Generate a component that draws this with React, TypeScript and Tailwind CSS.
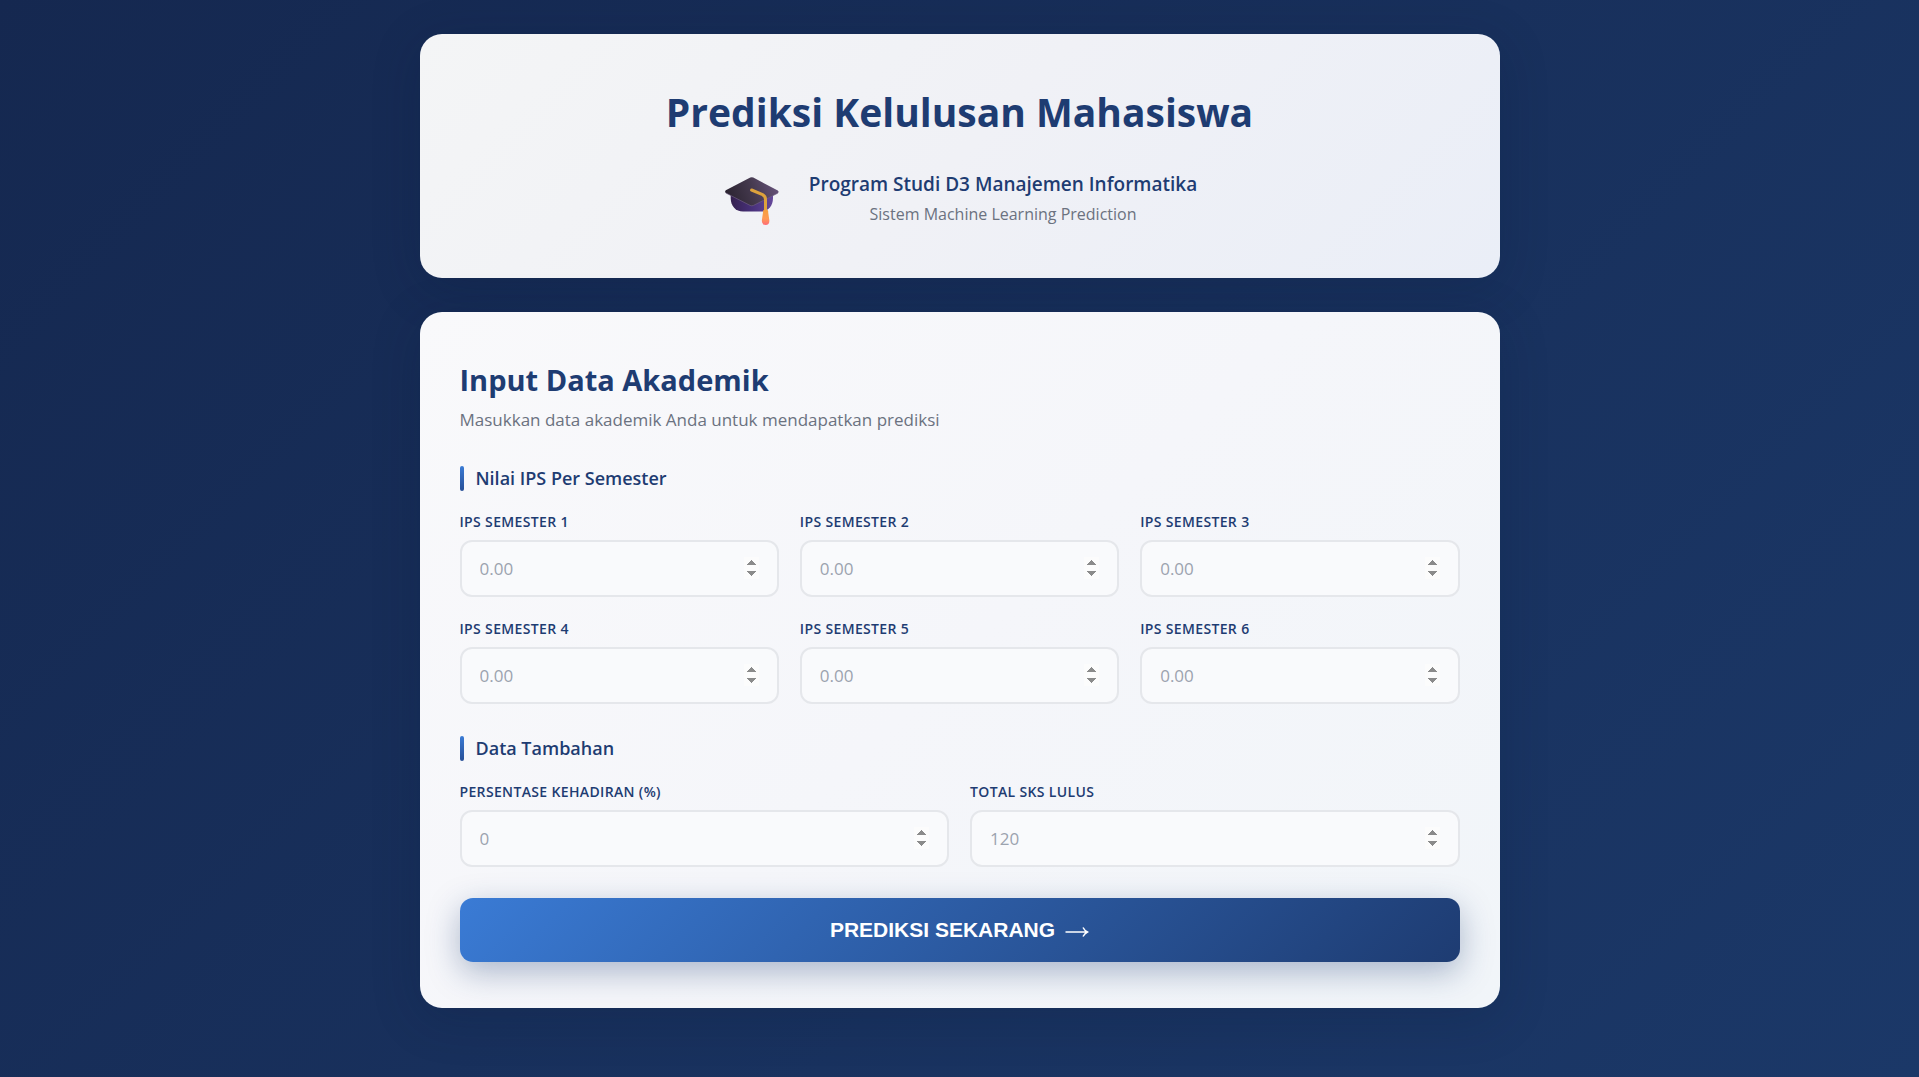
import { useState } from "react";

interface Field {
  id: string;
  label: string;
  placeholder: string;
  step: string;
  max: number;
}

const ipsFields: Field[] = [1, 2, 3, 4, 5, 6].map((n) => ({
  id: `ips${n}`,
  label: `IPS Semester ${n}`,
  placeholder: "0.00",
  step: "0.01",
  max: 4,
}));

const extraFields: Field[] = [
  {
    id: "kehadiran",
    label: "Persentase Kehadiran (%)",
    placeholder: "0",
    step: "1",
    max: 100,
  },
  {
    id: "sks",
    label: "Total SKS Lulus",
    placeholder: "120",
    step: "1",
    max: 160,
  },
];

function GraduationCap() {
  return (
    <svg width="60" height="60" viewBox="0 -5 60 60" aria-hidden="true">
      <defs>
        <linearGradient id="capTop" x1="0" y1="0.6" x2="1" y2="0.4">
          <stop offset="0" stopColor="#2a2330" />
          <stop offset="0.5" stopColor="#43384c" />
          <stop offset="1" stopColor="#66527a" />
        </linearGradient>
        <linearGradient id="capBase" x1="0" y1="0" x2="1" y2="0">
          <stop offset="0" stopColor="#35214f" />
          <stop offset="0.5" stopColor="#47307a" />
          <stop offset="1" stopColor="#65489a" />
        </linearGradient>
        <linearGradient id="tassel" x1="0" y1="0" x2="0" y2="1">
          <stop offset="0" stopColor="#f5a03c" />
          <stop offset="0.6" stopColor="#ff9a55" />
          <stop offset="1" stopColor="#ff6a78" />
        </linearGradient>
      </defs>
      <path
        d="M8.7 20 H51 V25 C51 33 46 38.6 39 38.6 H21 C13.7 38.6 8.7 33 8.7 25 Z"
        fill="url(#capBase)"
      />
      <path
        d="M28.3 4.6 Q29.8 3.8 31.3 4.6 L55.8 17.4 Q57.4 18.8 55.8 20.2 L31.5 32.6 Q29.8 33.4 28.1 32.6 L3.8 20 Q2.4 18.6 3.8 17.2 Z"
        fill="url(#capTop)"
      />
      <path
        d="M3.8 20 L28.1 32.4 Q29.8 33.2 31.5 32.4 L55.8 20.2"
        fill="none"
        stroke="#75628a"
        strokeWidth="1"
        opacity="0.6"
      />
      <path
        d="M29.6 17 L40.6 21.6 Q43.5 23.2 43.5 26.5 V38"
        fill="none"
        stroke="#dda23c"
        strokeWidth="3"
        strokeLinecap="round"
        strokeLinejoin="round"
      />
      <path
        d="M41 39.5 Q40.6 36.4 43.6 36.4 Q46.6 36.4 46.2 39.5 L47.3 47 Q47.8 52 43.6 52 Q39.4 52 39.9 47 Z"
        fill="url(#tassel)"
      />
    </svg>
  );
}

function SectionTitle({ children }: { children: React.ReactNode }) {
  return (
    <div className="flex items-center gap-3 mb-[21px]">
      <span className="w-1 h-[25px] rounded-xs bg-linear-to-b from-[#3a7bd5] to-[#274f97]" />
      <h3 className="text-[18px] leading-[25px] font-semibold text-[#1e3c72]">
        {children}
      </h3>
    </div>
  );
}

interface NumberFieldProps {
  field: Field;
  value: string;
  onChange: (value: string) => void;
}

function NumberField({ field, value, onChange }: NumberFieldProps) {
  return (
    <div>
      <label
        htmlFor={field.id}
        className="block mb-2 text-[14px] leading-5 font-semibold tracking-wide uppercase text-[#1e3c72]"
      >
        {field.label}
      </label>
      <input
        id={field.id}
        type="number"
        min={0}
        max={field.max}
        step={field.step}
        placeholder={field.placeholder}
        value={value}
        onChange={(e) => onChange(e.target.value)}
        className="block w-full h-[57px] px-[18px] text-[17px] text-[#1e3c72] bg-[#f9fafc] border-2 border-[#e5e7eb] rounded-xl outline-none placeholder:text-[#9ca3af] focus:border-[#3a7bd5] [&::-webkit-inner-spin-button]:opacity-100"
      />
    </div>
  );
}

export default function App() {
  const [values, setValues] = useState<Record<string, string>>({});

  const update = (id: string) => (value: string) =>
    setValues((prev) => ({ ...prev, [id]: value }));

  return (
    <div className="min-h-screen px-5 py-[34px] bg-linear-135 from-[#152850] to-[#1b3868] font-['Open_Sans','Noto_Sans',sans-serif]">
      <div className="max-w-[1080px] mx-auto flex flex-col gap-[34px]">
        <header className="px-10 pt-12 pb-[50px] rounded-[22px] text-center bg-linear-135 from-[#f4f5f6] via-[#f0f1f6] to-[#eaeef7] shadow-[0_10px_50px_rgba(10,25,55,0.2)]">
          <h1 className="mb-[26px] text-[39px] leading-[60px] font-bold text-[#1e3c72]">
            Prediksi Kelulusan Mahasiswa
          </h1>
          <div className="flex items-center justify-center gap-[27px]">
            <GraduationCap />
            <div>
              <p className="text-[19px] leading-8 font-semibold text-[#1e3c72]">
                Program Studi D3 Manajemen Informatika
              </p>
              <p className="text-[16px] leading-7 text-[#6b7280]">
                Sistem Machine Learning Prediction
              </p>
            </div>
          </div>
        </header>

        <main className="px-10 pt-12 pb-[46px] rounded-[22px] bg-linear-135 from-[#f9f9fb] via-[#f5f6fa] to-[#f1f5f9] shadow-[0_10px_50px_rgba(10,25,55,0.2)]">
          <h2 className="mb-1.5 text-[29px] leading-10 font-bold text-[#1e3c72]">
            Input Data Akademik
          </h2>
          <p className="mb-8 text-[17px] leading-7 text-[#6b7280]">
            Masukkan data akademik Anda untuk mendapatkan prediksi
          </p>

          <form onSubmit={(e) => e.preventDefault()}>
            <SectionTitle>Nilai IPS Per Semester</SectionTitle>
            <div className="grid grid-cols-3 gap-x-[21px] gap-y-[22px] mb-8">
              {ipsFields.map((f) => (
                <NumberField
                  key={f.id}
                  field={f}
                  value={values[f.id] ?? ""}
                  onChange={update(f.id)}
                />
              ))}
            </div>

            <SectionTitle>Data Tambahan</SectionTitle>
            <div className="grid grid-cols-2 gap-x-[21px] mb-[31px]">
              {extraFields.map((f) => (
                <NumberField
                  key={f.id}
                  field={f}
                  value={values[f.id] ?? ""}
                  onChange={update(f.id)}
                />
              ))}
            </div>

            <button
              type="submit"
              className="flex items-center justify-center gap-[10px] w-full h-16 rounded-[13px] text-white bg-linear-135 from-[#3a7bd5] to-[#1e3c72] shadow-[0_10px_32px_rgba(30,60,114,0.35)] font-['Liberation_Sans',sans-serif] text-[21px] font-bold uppercase"
            >
              <span>Prediksi Sekarang</span>
              <svg
                width="24"
                height="12"
                viewBox="0 0 24 12"
                fill="none"
                stroke="currentColor"
                strokeWidth="1.5"
                className="mt-1"
                aria-hidden="true"
              >
                <path d="M0.5 6 H22.5 M18 1.5 Q19.5 4.5 22.5 6 Q19.5 7.5 18 10.5" />
              </svg>
            </button>
          </form>
        </main>
      </div>
    </div>
  );
}
